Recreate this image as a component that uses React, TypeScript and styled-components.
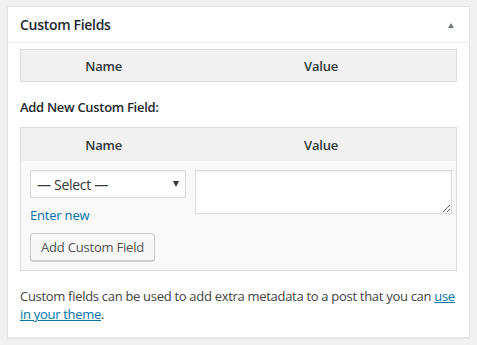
import styled, { createGlobalStyle } from "styled-components";

const GlobalStyle = createGlobalStyle`
    body {
        margin: 0;
        background: #f1f1f1;
        font-family: "Open Sans", "Noto Sans", sans-serif;
        font-size: 13px;
        color: #444;
    }
`

function App()
{
    return (
        <Page>
            <GlobalStyle/>
            <Postbox>
                <BoxHeader>
                    <BoxTitle>Custom Fields</BoxTitle>
                    <ToggleArrow/>
                </BoxHeader>
                <Inside>
                    <ListTable>
                        <colgroup>
                            <col style={{ width: "38%" }}/>
                            <col/>
                        </colgroup>
                        <thead>
                            <tr>
                                <HeadCell>Name</HeadCell>
                                <HeadCell>Value</HeadCell>
                            </tr>
                        </thead>
                    </ListTable>

                    <AddLabel>Add New Custom Field:</AddLabel>

                    <NewMetaTable>
                        <colgroup>
                            <col style={{ width: "38%" }}/>
                            <col/>
                        </colgroup>
                        <thead>
                            <tr>
                                <HeadCell $tall>Name</HeadCell>
                                <HeadCell $tall>Value</HeadCell>
                            </tr>
                        </thead>
                        <tbody>
                            <tr>
                                <NameCell>
                                    <SelectWrap>
                                        <MetaSelect defaultValue="">
                                            <option value="">— Select —</option>
                                        </MetaSelect>
                                        <SelectArrow/>
                                    </SelectWrap>
                                    <EnterNew href="#">Enter new</EnterNew>
                                </NameCell>
                                <ValueCell>
                                    <MetaValue/>
                                </ValueCell>
                            </tr>
                            <tr>
                                <ButtonCell colSpan={2}>
                                    <Button>Add Custom Field</Button>
                                </ButtonCell>
                            </tr>
                        </tbody>
                    </NewMetaTable>

                    <Help>
                        Custom fields can be used to add extra metadata to a post that you can <HelpLink href="#">use in your theme</HelpLink>.
                    </Help>
                </Inside>
            </Postbox>
        </Page>
    )
}


const Page = styled.div`
    padding: 6px 7px 20px 7px;
`
const Postbox = styled.div`
    width: 463px;
    box-sizing: border-box;
    background: #fff;
    border: 1px solid #e5e5e5;
    box-shadow: 0 1px 1px rgba(0, 0, 0, 0.04);
`
const BoxHeader = styled.div`
    height: 35px;
    padding: 0 12px;
    display: flex;
    align-items: center;
    justify-content: space-between;
    border-bottom: 1px solid #eee;
`
const BoxTitle = styled.h2`
    margin: 0;
    font-size: 14px;
    font-weight: 600;
    color: #23282d;
    letter-spacing: -0.3px;
`
const ToggleArrow = styled.span`
    width: 0;
    height: 0;
    margin-right: 3px;
    margin-top: 2px;
    border-left: 3px solid transparent;
    border-right: 3px solid transparent;
    border-bottom: 5px solid #72777c;
`
const Inside = styled.div`
    padding: 6px 12px 14px 12px;
`
const ListTable = styled.table`
    width: 100%;
    border-collapse: collapse;
    table-layout: fixed;
    background: #f1f1f1;
    border: 1px solid #dcdcdc;
`
const HeadCell = styled.th<{ $tall?: boolean }>`
    height: ${p => p.$tall ? "33px" : "31px"};
    padding: 0;
    text-align: center;
    font-weight: 600;
    font-size: 13px;
    color: #32373c;
    letter-spacing: -0.2px;
    background: #f1f1f1;
`
const AddLabel = styled.p`
    margin: 16px 0 11px 0;
    font-weight: 600;
    color: #23282d;
    letter-spacing: -0.3px;
`
const NewMetaTable = styled.table`
    width: 100%;
    border-collapse: collapse;
    table-layout: fixed;
    background: #f9f9f9;
    border: 1px solid #dcdcdc;
`
const NameCell = styled.td`
    vertical-align: top;
    padding: 9px 0 0 9px;
`
const ValueCell = styled.td`
    vertical-align: top;
    padding: 9px 4px 0 9px;
`
const SelectWrap = styled.div`
    position: relative;
    width: 156px;
`
const MetaSelect = styled.select`
    appearance: none;
    width: 156px;
    height: 28px;
    box-sizing: border-box;
    padding: 0 20px 0 6px;
    border: 1px solid #ddd;
    border-radius: 0;
    background: #fff;
    font-family: inherit;
    font-size: 14px;
    color: #32373c;
    letter-spacing: -0.3px;
    box-shadow: inset 0 1px 2px rgba(0, 0, 0, 0.07);
`
const SelectArrow = styled.span`
    position: absolute;
    right: 7px;
    top: 11px;
    width: 0;
    height: 0;
    border-left: 3px solid transparent;
    border-right: 3px solid transparent;
    border-top: 6px solid #32373c;
    pointer-events: none;
`
const EnterNew = styled.a`
    display: inline-block;
    margin-top: 8px;
    color: #0073aa;
    text-decoration: none;
    letter-spacing: -0.2px;
`
const MetaValue = styled.textarea`
    display: block;
    width: 100%;
    height: 44px;
    box-sizing: border-box;
    border: 1px solid #ddd;
    background: #fff;
    box-shadow: inset 0 1px 2px rgba(0, 0, 0, 0.07);
    font-family: inherit;
    margin: 0;
`
const ButtonCell = styled.td`
    padding: 9px 0 9px 9px;
`
const Button = styled.button`
    height: 28px;
    padding: 0 10px;
    box-sizing: border-box;
    background: #f7f7f7;
    border: 1px solid #ccc;
    border-radius: 3px;
    box-shadow: 0 1px 0 #ccc;
    color: #555;
    font-family: inherit;
    font-size: 13px;
    letter-spacing: -0.2px;
    cursor: pointer;
`
const Help = styled.p`
    margin: 16px 0 0 0;
    line-height: 1.4;
    color: #444;
    letter-spacing: -0.3px;
`
const HelpLink = styled.a`
    color: #0073aa;
    text-decoration: underline;
`


export default App;
